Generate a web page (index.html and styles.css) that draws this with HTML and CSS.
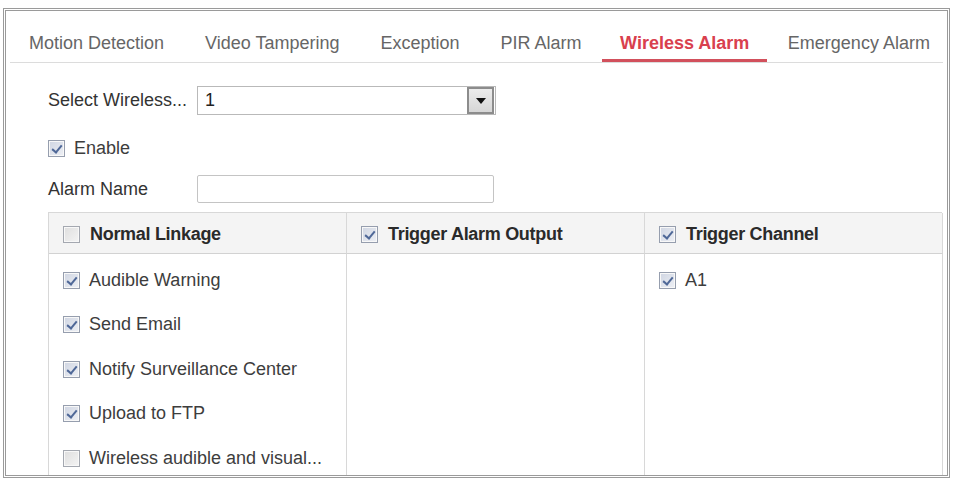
FILE: index.html
```html
<!DOCTYPE html>
<html>
<head>
<meta charset="utf-8">
<link rel="stylesheet" href="styles.css">
</head>
<body>
<div class="frame">
  <div class="tabs">
    <div class="tab">Motion Detection</div>
    <div class="tab">Video Tampering</div>
    <div class="tab">Exception</div>
    <div class="tab">PIR Alarm</div>
    <div class="tab active">Wireless Alarm</div>
    <div class="tab">Emergency Alarm</div>
  </div>
  <div class="form">
    <div class="row row-select">
      <span class="label">Select Wireless...</span>
      <div class="select"><span class="select-value">1</span><span class="select-btn"><span class="arrow"></span></span></div>
    </div>
    <div class="row row-enable">
      <span class="cb checked"></span><span class="cb-text">Enable</span>
    </div>
    <div class="row row-name">
      <span class="label">Alarm Name</span>
      <div class="input"></div>
    </div>
    <div class="table">
      <div class="th"><span class="cb"></span><span class="th-text">Normal Linkage</span></div>
      <div class="th"><span class="cb checked"></span><span class="th-text">Trigger Alarm Output</span></div>
      <div class="th last"><span class="cb checked"></span><span class="th-text">Trigger Channel</span></div>
      <div class="td">
        <div class="item"><span class="cb checked"></span><span class="cb-text">Audible Warning</span></div>
        <div class="item"><span class="cb checked"></span><span class="cb-text">Send Email</span></div>
        <div class="item"><span class="cb checked"></span><span class="cb-text">Notify Surveillance Center</span></div>
        <div class="item"><span class="cb checked"></span><span class="cb-text">Upload to FTP</span></div>
        <div class="item"><span class="cb"></span><span class="cb-text">Wireless audible and visual...</span></div>
      </div>
      <div class="td"></div>
      <div class="td last">
        <div class="item"><span class="cb checked"></span><span class="cb-text">A1</span></div>
      </div>
    </div>
  </div>
</div>
</body>
</html>
```
FILE: styles.css
```css
* { box-sizing: border-box; }
html, body { margin: 0; padding: 0; background: #fff; }
body {
  font-family: "Liberation Sans", Arial, sans-serif;
  font-size: 18px;
  color: #3a3a3a;
}
.frame {
  margin: 8px 3px 0 3px;
  width: 947px;
  height: 470px;
  border: 3px double #9a9a9a;
  overflow: hidden;
}
.tabs {
  display: flex;
  margin: 0 4px;
  border-bottom: 1px solid #dcdcdc;
}
.tab {
  padding: 21px 20.5px 5px 20.5px;
  line-height: 22px;
  color: #666;
  border-bottom: 3px solid transparent;
  white-space: nowrap;
}
.tab:first-child { padding-left: 19px; }
.tab.active {
  color: #d9404e;
  font-weight: bold;
  border-bottom-color: #d2505c;
  padding-left: 18px;
  padding-right: 18px;
}
.form {
  padding: 23px 0 0 42px;
}
.row {
  display: flex;
  align-items: center;
}
.label {
  width: 149px;
  color: #333;
  white-space: nowrap;
}
.row-select { height: 29px; }
.select {
  width: 299px;
  height: 29px;
  border: 1px solid #b9b9b9;
  display: flex;
  align-items: center;
  justify-content: space-between;
  padding-left: 7px;
}
.select-value { color: #222; }
.select-btn {
  width: 27px;
  height: 27px;
  background: linear-gradient(#ececec, #d6d6d6);
  border: 2px solid #8c8c8c;
  margin-right: 1px;
  display: flex;
  align-items: center;
  justify-content: center;
}
.arrow {
  width: 0;
  height: 0;
  border-left: 5px solid transparent;
  border-right: 5px solid transparent;
  border-top: 6px solid #111;
}
.row-enable { height: 22px; margin-top: 22px; }
.row-name { height: 28px; margin-top: 16px; }
.input {
  width: 297px;
  height: 28px;
  border: 1px solid #c4c4c4;
  border-radius: 2px;
}
.cb {
  display: inline-block;
  width: 17px;
  height: 17px;
  border: 1px solid #a4a8b0;
  background: linear-gradient(135deg, #dedede, #f4f4f4);
  box-shadow: inset 0 0 0 1px #f8f8f8;
  flex: none;
  position: relative;
}
.cb.checked {
  background: linear-gradient(135deg, #cfd5e2, #eef0f5);
  border-color: #969eae;
}
.cb.checked::after {
  content: "";
  position: absolute;
  left: 5px;
  top: 2px;
  width: 4px;
  height: 8px;
  border-right: 2px solid #4f6898;
  border-bottom: 2px solid #4f6898;
  transform: rotate(40deg);
}
.cb-text {
  margin-left: 9px;
  color: #3d3d3d;
  white-space: nowrap;
}
.table {
  margin-top: 9px;
  width: 894px;
  display: grid;
  grid-template-columns: 298px 298px 298px;
  grid-template-rows: 41px auto;
  border-top: 1px solid #d8d8d8;
  border-left: 1px solid #d8d8d8;
}
.th {
  background: #f4f4f4;
  border-right: 1px solid #d8d8d8;
  border-bottom: 1px solid #d2d2d2;
  display: flex;
  align-items: center;
  padding: 3px 0 0 14px;
}
.th-text {
  margin-left: 10px;
  font-weight: bold;
  color: #2a2a2a;
  letter-spacing: -0.3px;
}
.td {
  border-right: 1px solid #d8d8d8;
  padding: 4px 0 0 14px;
  height: 240px;
}
.item {
  height: 44.5px;
  display: flex;
  align-items: center;
}
```
